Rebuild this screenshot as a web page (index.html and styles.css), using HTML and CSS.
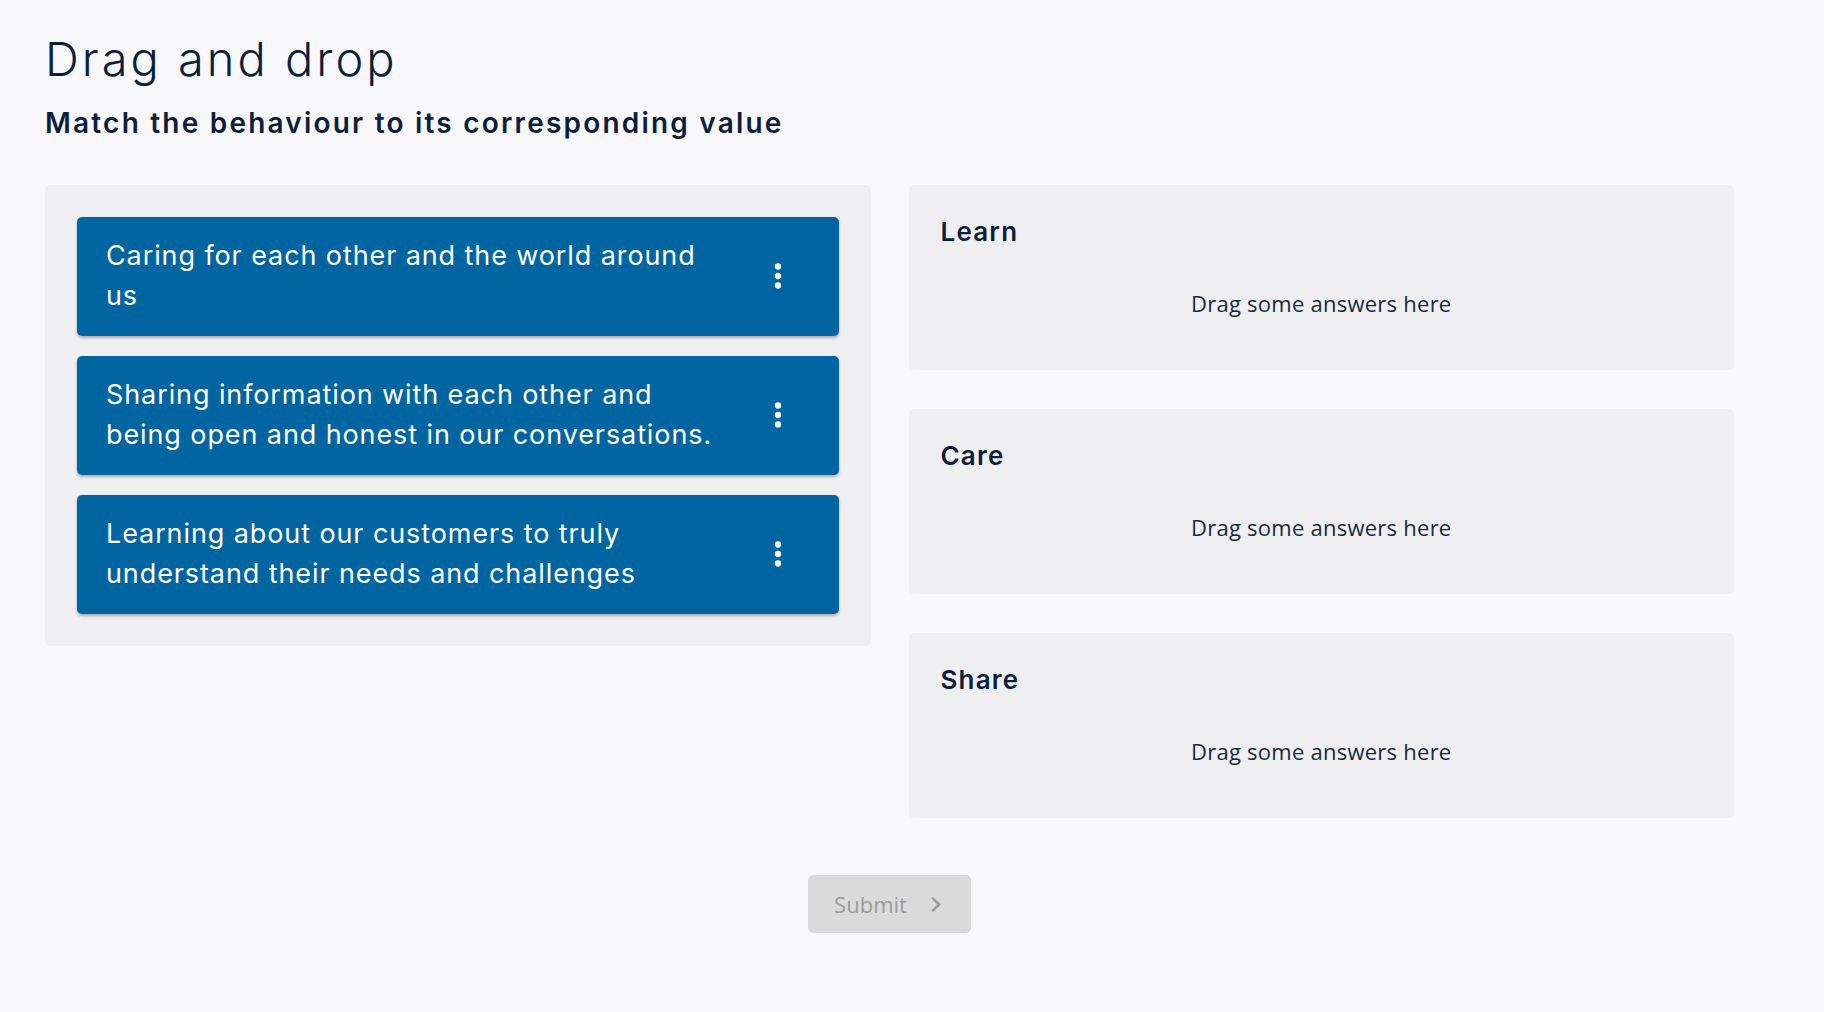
FILE: index.html
```html
<!DOCTYPE html>
<html lang="en">
<head>
<meta charset="utf-8">
<title>Drag and drop</title>
<link rel="stylesheet" href="styles.css">
</head>
<body>
<main class="page">
  <h1 class="title">Drag and drop</h1>
  <h2 class="subtitle">Match the behaviour to its corresponding value</h2>
  <div class="board">
    <div class="source">
      <div class="card">
        <span class="card-text">Caring for each other and the world around us</span>
        <svg class="kebab" viewBox="0 0 24 24" aria-hidden="true"><circle cx="12" cy="6" r="2"/><circle cx="12" cy="12" r="2"/><circle cx="12" cy="18" r="2"/></svg>
      </div>
      <div class="card">
        <span class="card-text">Sharing information with each other and being open and honest in our conversations.</span>
        <svg class="kebab" viewBox="0 0 24 24" aria-hidden="true"><circle cx="12" cy="6" r="2"/><circle cx="12" cy="12" r="2"/><circle cx="12" cy="18" r="2"/></svg>
      </div>
      <div class="card">
        <span class="card-text">Learning about our customers to truly understand their needs and challenges</span>
        <svg class="kebab" viewBox="0 0 24 24" aria-hidden="true"><circle cx="12" cy="6" r="2"/><circle cx="12" cy="12" r="2"/><circle cx="12" cy="18" r="2"/></svg>
      </div>
    </div>
    <div class="zones">
      <section class="zone">
        <h3 class="zone-title">Learn</h3>
        <p class="zone-drop">Drag some answers here</p>
      </section>
      <section class="zone">
        <h3 class="zone-title">Care</h3>
        <p class="zone-drop">Drag some answers here</p>
      </section>
      <section class="zone">
        <h3 class="zone-title">Share</h3>
        <p class="zone-drop">Drag some answers here</p>
      </section>
    </div>
  </div>
  <div class="actions">
    <button class="submit" type="button" disabled>
      <span>Submit</span>
      <svg class="chev" viewBox="0 0 11 15" aria-hidden="true"><polyline points="2,1.6 8.2,7.5 2,13.4"/></svg>
    </button>
  </div>
</main>
</body>
</html>
```

FILE: styles.css
```css
html, body {
  margin: 0;
  padding: 0;
  background: #f8f8fa;
}

body {
  font-family: "Inter", "Liberation Sans", sans-serif;
  color: #0c1e3b;
}

.page {
  padding: 31px 90px 0 45px;
}

.title {
  margin: 0;
  font-size: 47px;
  line-height: 56px;
  font-weight: 300;
  letter-spacing: 3px;
  color: #0c1e3b;
}

.subtitle {
  margin: 18px 0 0;
  font-size: 28px;
  line-height: 36px;
  font-weight: 600;
  letter-spacing: 2.2px;
  color: #0c1e3b;
}

.board {
  margin-top: 44px;
  display: grid;
  grid-template-columns: 1fr 1fr;
  column-gap: 38px;
  align-items: start;
}

.source {
  background: #efeff1;
  border-radius: 5px;
  padding: 32px;
  display: flex;
  flex-direction: column;
  gap: 20px;
}

.card {
  background: #0065a1;
  color: #ffffff;
  border-radius: 5px;
  box-shadow: 0 2px 3px rgba(0, 0, 0, 0.28);
  min-height: 119px;
  box-sizing: border-box;
  padding: 19px 42px 20px 29px;
  display: flex;
  align-items: center;
  gap: 41px;
}

.card-text {
  flex: 1;
  font-size: 27px;
  line-height: 40px;
  font-weight: 400;
  letter-spacing: 0.9px;
}

.kebab {
  width: 38px;
  height: 38px;
  flex: none;
  fill: #ffffff;
}

.zones {
  display: flex;
  flex-direction: column;
  gap: 39px;
}

.zone {
  background: #efeff1;
  border-radius: 5px;
  padding: 31px 32px 32px;
}

.zone-title {
  margin: 0;
  font-size: 26px;
  line-height: 32px;
  font-weight: 600;
  letter-spacing: 1.2px;
  color: #0c1e3b;
}

.zone-drop {
  margin: 0;
  padding: 39px 0 18px;
  text-align: center;
  font-family: "Open Sans", "Liberation Sans", sans-serif;
  font-size: 22px;
  line-height: 33px;
  letter-spacing: 0.25px;
  color: #1a2942;
}

.actions {
  margin-top: 57px;
  display: flex;
  justify-content: center;
}

.submit {
  display: flex;
  align-items: center;
  gap: 24px;
  height: 58px;
  padding: 0 29px 0 26px;
  border: none;
  border-radius: 5px;
  background: #dadada;
  color: #9b9b9b;
  font-family: "Open Sans", "Liberation Sans", sans-serif;
  font-size: 22px;
  line-height: 30px;
}

.chev {
  width: 11px;
  height: 15px;
  fill: none;
  stroke: #9b9b9b;
  stroke-width: 2.5;
  stroke-linecap: square;
}
```
